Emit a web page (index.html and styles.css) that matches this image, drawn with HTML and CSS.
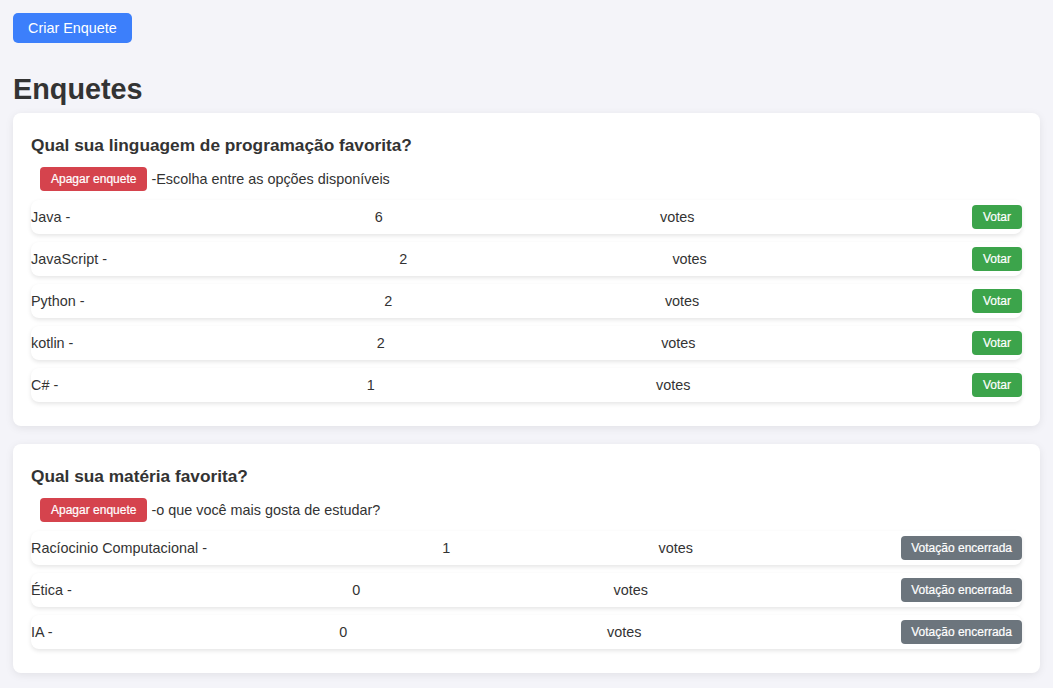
FILE: index.html
```html
<!DOCTYPE html>
<html lang="pt-BR">
<head>
<meta charset="utf-8">
<title>Enquetes</title>
<link rel="stylesheet" href="styles.css">
</head>
<body>
  <div class="top">
    <button class="btn btn-primary">Criar Enquete</button>
  </div>
  <h1 class="page-title">Enquetes</h1>

  <div class="poll">
    <h3 class="poll-title">Qual sua linguagem de programação favorita?</h3>
    <p class="poll-desc"><button class="btn btn-small btn-danger">Apagar enquete</button><span>-Escolha entre as opções disponíveis</span></p>
    <div class="option"><span class="opt-label">Java -</span><span class="opt-count">6</span><span class="opt-votes">votes</span><button class="btn btn-small btn-success">Votar</button></div>
    <div class="option"><span class="opt-label">JavaScript -</span><span class="opt-count">2</span><span class="opt-votes">votes</span><button class="btn btn-small btn-success">Votar</button></div>
    <div class="option"><span class="opt-label">Python -</span><span class="opt-count">2</span><span class="opt-votes">votes</span><button class="btn btn-small btn-success">Votar</button></div>
    <div class="option"><span class="opt-label">kotlin -</span><span class="opt-count">2</span><span class="opt-votes">votes</span><button class="btn btn-small btn-success">Votar</button></div>
    <div class="option"><span class="opt-label">C# -</span><span class="opt-count">1</span><span class="opt-votes">votes</span><button class="btn btn-small btn-success">Votar</button></div>
  </div>

  <div class="poll">
    <h3 class="poll-title">Qual sua matéria favorita?</h3>
    <p class="poll-desc"><button class="btn btn-small btn-danger">Apagar enquete</button><span>-o que você mais gosta de estudar?</span></p>
    <div class="option"><span class="opt-label">Racíocinio Computacional -</span><span class="opt-count">1</span><span class="opt-votes">votes</span><button class="btn btn-small btn-closed">Votação encerrada</button></div>
    <div class="option"><span class="opt-label">Ética -</span><span class="opt-count">0</span><span class="opt-votes">votes</span><button class="btn btn-small btn-closed">Votação encerrada</button></div>
    <div class="option"><span class="opt-label">IA -</span><span class="opt-count">0</span><span class="opt-votes">votes</span><button class="btn btn-small btn-closed">Votação encerrada</button></div>
  </div>
</body>
</html>
```

FILE: styles.css
```css
* { box-sizing: border-box; }

body {
  margin: 0;
  padding: 13px;
  background: #f4f4f9;
  color: #333;
  font-family: "Liberation Sans", Arial, sans-serif;
  font-size: 14.4px;
}

.top { display: flex; }

.btn {
  font-family: "Liberation Sans", Arial, sans-serif;
  border: none;
  color: #fff;
  cursor: pointer;
  line-height: normal;
}

.btn-primary {
  background: #3c7ffb;
  font-size: 14.4px;
  padding: 7px 15px;
  border-radius: 5px;
}

.page-title {
  font-size: 28.8px;
  font-weight: bold;
  margin: 30px 0 7px;
  color: #333;
}

.poll {
  background: #fff;
  border-radius: 8px;
  padding: 18px 18px 16px;
  margin-bottom: 18px;
  box-shadow: 0 2px 8px rgba(0, 0, 0, 0.08);
}

.poll-title {
  font-size: 17.28px;
  font-weight: bold;
  margin: 4px 0 0;
  color: #333;
}

.poll-desc {
  display: flex;
  align-items: center;
  gap: 4px;
  margin: 11px 0 9px;
  height: 24px;
}

.btn-small {
  font-size: 12px;
  padding: 5px 10px;
  border-radius: 4px;
  -webkit-text-stroke: 0.2px #fff;
}

.btn-danger {
  background: #d5434d;
  margin-left: 9px;
  padding: 5px 11px;
}

.btn-success {
  background: #3ca44b;
  padding: 5px 11px;
}

.btn-closed { background: #6c757d; }

.option {
  display: flex;
  justify-content: space-between;
  align-items: center;
  padding: 5px 0;
  margin-bottom: 8px;
  background: #fff;
  border-radius: 8px;
  box-shadow: 0 2px 4px rgba(0, 0, 0, 0.1);
}

.opt-label { margin-right: 27px; }
```
